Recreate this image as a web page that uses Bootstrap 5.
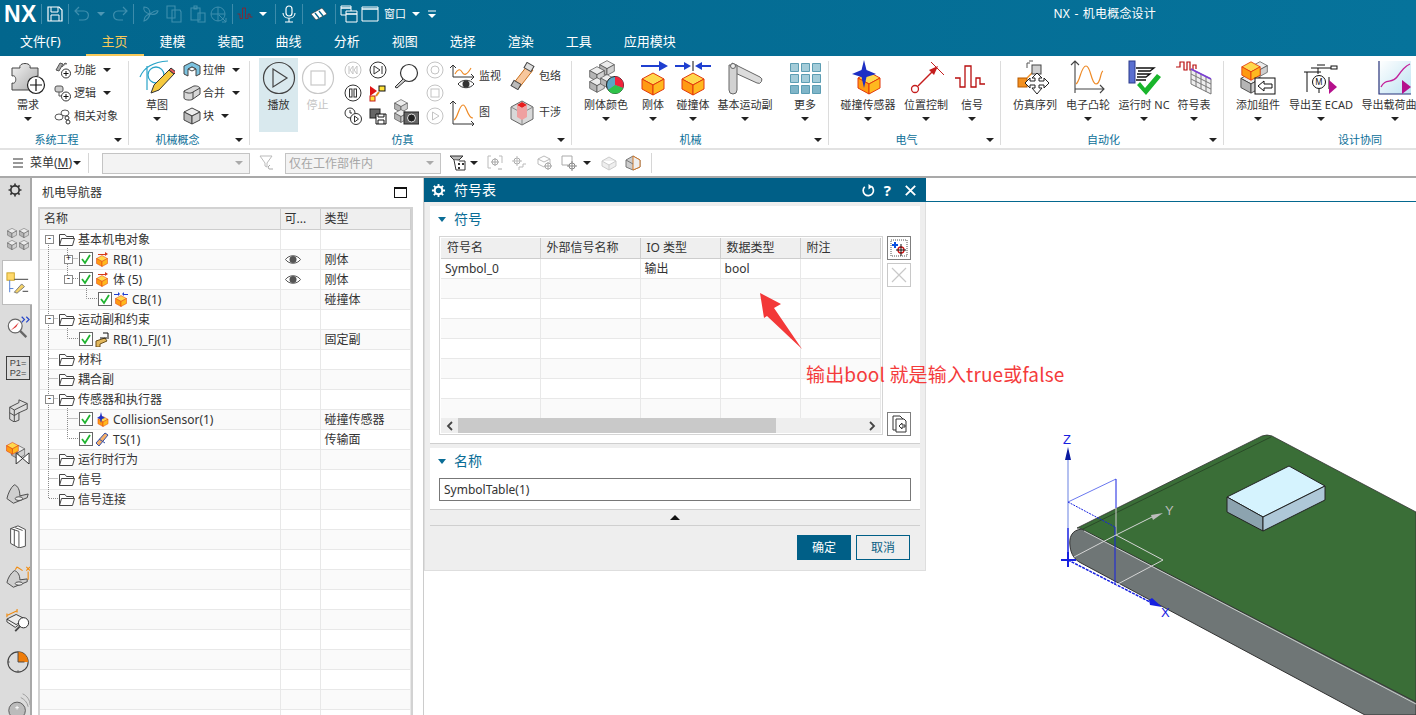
<!DOCTYPE html>
<html lang="zh-CN">

<head>
    <meta charset="UTF-8">
    <meta name="viewport" content="width=device-width, initial-scale=1.0">
    <title>NX - 机电概念设计</title>
    <link href="https://cdn.jsdelivr.net/npm/bootstrap@5.3.0/dist/css/bootstrap.min.css" rel="stylesheet">
    <style>
        html, body { height: 715px; overflow: hidden; }
        body {
            margin: 0;
            background: #fff;
            color: #333;
            font-family: "Noto Sans", "Noto Sans CJK SC", sans-serif;
            font-size: 11px;
            line-height: 14px;
        }
        svg { display: block; flex: none; }
        .sym-defs { position: absolute; }
        .tri { display: inline-block; width: 0; height: 0; border: 4px solid transparent; border-bottom: 0; border-top-color: #222; flex: none; }

        /* title + tabs */
        .top-band { background: linear-gradient(90deg, #02668d, #06739b); color: #fff; height: 56px; }
        .qa-bar { height: 28px; }
        .qa-nx { width: 37px; padding-left: 4px; font: bold 23px/28px "Liberation Sans", sans-serif; letter-spacing: .5px; }
        .qa-sep { width: 1px; height: 20px; margin: 0 4px; background: #3d8cab; flex: none; }
        .qa-btn { width: 18px; display: flex; justify-content: center; flex: none; }
        .qa-btn.wide { width: 24px; }
        .qa-tri { width: 20px; display: flex; justify-content: center; flex: none; }
        .qa-tri.nar { width: 16px; }
        .qa-tri .tri { border-top-color: #fff; }
        .qa-tri.dim .tri { border-top-color: #4f97b4; }
        .qa-win { font-size: 11px; margin-left: 2px; width: 24px; }
        .qa-title { margin-left: auto; margin-right: 260px; font-size: 12px; word-spacing: 1px; letter-spacing: .2px; }
        .tab-row { height: 28px; flex-wrap: nowrap; padding-left: 4px; }
        .tab-row .nav-link { color: #fff; font-size: 13px; line-height: 18px; padding: 4px 16px 2px; height: 28px; border-bottom: 2px solid transparent; margin-right: 0; }
        .tab-row .nav-link.file-tab { margin-right: 9px; }
        .tab-row .nav-link.active { color: #f7c95a; border-bottom-color: #f7c95a; }

        /* ribbon */
        .ribbon { height: 94px; border-bottom: 2px solid #e2e2e2; overflow: hidden; }
        .rb-group { height: 92px; flex: none; position: relative; display: flex; flex-direction: column; }
        .rb-group::after { content: ""; position: absolute; right: 0; top: 5px; bottom: 3px; width: 1px; background: #dcdcdc; }
        .rb-body { height: 77px; padding-top: 2px; display: flex; }
        .rb-foot { height: 14px; margin-top: 0; padding-right: 18px; position: relative; text-align: center; color: #0b6f98; line-height: 14px; }
        .rb-foot .tri { position: absolute; right: 7px; top: 5px; }
        .g-sys { width: 129px; padding-left: 2px; }
        .g-con { width: 121px; padding-left: 2px; }
        .g-sim { width: 322px; padding-left: 9px; }
        .g-mec { width: 257px; padding-left: 6px; }
        .g-ele { width: 172px; padding-left: 9px; }
        .g-aut { width: 223px; padding-left: 8px; }
        .g-des { width: 290px; padding-left: 8px; }
        .g-des::after { display: none; }
        .g-sim .rb-foot, .g-con .rb-foot, .g-mec .rb-foot, .g-ele .rb-foot, .g-aut .rb-foot, .g-des .rb-foot { margin-left: -8px; }
        .rb-big { display: flex; flex-direction: column; align-items: center; padding-top: 2px; height: 74px; flex: none; white-space: nowrap; }
        .rb-big svg { width: 36px; height: 36px; }
        .rb-big span.lb { margin-top: 2px; }
        .rb-big span.lb-cut { margin-right: 12px; }
        .rb-big .tri { margin-top: 5px; }
        .rb-big.is-on { background: #d9e9ee; }
        .rb-big.is-off { color: #c4c4c4; }
        .b36 { width: 36px; } .b38 { width: 38px; } .b39 { width: 39px; } .b42 { width: 42px; }
        .b44 { width: 44px; } .b52 { width: 52px; } .b54 { width: 54px; } .b56 { width: 56px; }
        .b58 { width: 58px; } .b60 { width: 60px; } .b62 { width: 62px; } .b74 { width: 74px; }
        .gap7 { margin-left: 7px; }
        .gap3 { margin-left: 3px; }
        .small-col { display: flex; flex-direction: column; flex: none; }
        .small-row { height: 23px; display: flex; align-items: center; white-space: nowrap; }
        .small-row svg { width: 18px; height: 18px; margin-right: 2px; }
        .small-row .tri { margin-left: 7px; }
        .ic-col { display: flex; flex-direction: column; align-items: center; flex: none; }
        .ic-col > div { height: 23px; display: flex; align-items: center; }
        .ic-col svg { width: 18px; height: 18px; }
        .c25 { width: 25px; } .c28 { width: 28px; } .c31 { width: 31px; }
        .lens-col { display: flex; flex-direction: column; align-items: center; }
        .lens-col svg { width: 26px; height: 26px; }
        .lens-col div { height: 36px; display: flex; align-items: center; }
        .wide-col { display: flex; flex-direction: column; flex: none; }
        .wide-col div { height: 36px; display: flex; align-items: center; white-space: nowrap; }
        .wide-col svg { width: 26px; height: 28px; margin-right: 4px; }
        .w52 { width: 60px; } .w54 { width: 60px; }

        /* selection toolbar */
        .sel-bar { height: 28px; border-bottom: 2px solid #a9a9a9; padding-left: 12px; font-size: 12px; }
        .sel-bar svg { width: 16px; height: 16px; }
        .sel-bar svg.menu-ic { width: 12px; height: 12px; margin-right: 6px; }
        .sel-sep { width: 1px; height: 20px; background: #d6d6d6; flex: none; }
        .form-select.sel-box {
            height: 21px; min-height: 21px; padding: 0 20px 0 3px; font-size: 12px; line-height: 19px; border-radius: 0;
            border-color: #c4c4c4; background-color: #f3f3f3; color: #a6a6a6; flex: none;
            background-image: url("data:image/svg+xml,%3Csvg xmlns='http://www.w3.org/2000/svg' viewBox='0 0 8 4'%3E%3Cpath d='M0 0h8L4 4z' fill='%23aaa'/%3E%3C/svg%3E");
            background-position: right 6px center; background-size: 8px 4px;
        }
        .sb-a { width: 148px; margin-left: 13px; }
        .sb-b { width: 156px; margin-left: 10px; }
        .ml1 { margin-left: 1px; }
        .ml6 { margin-left: 6px; }
        .ml7 { margin-left: 7px; }
        .ml8 { margin-left: 8px; }
        .ml9 { margin-left: 9px; }
        .ml10 { margin-left: 10px; }

        /* body */
        .work { height: 537px; position: relative; overflow: hidden; }
        .side-rail { width: 32px; background: #dcdcdc; border-right: 2px solid #a8a8a8; flex: none; }
        .rail-btn { height: 42px; width: 30px; display: flex; align-items: center; padding-left: 6px; }
        .rail-btn svg { width: 24px; height: 24px; }
        .rail-btn.first { height: 24px; margin-bottom: 16px; padding-left: 3px; }
        .rail-btn.active { background: #fff; border: 1px solid #bdbdbd; border-right: 0; height: 45px; margin-left: 2px; width: 30px; margin-right: -2px; padding-left: 3px; position: relative; }
        .nav-pane { width: 382px; flex: none; padding-left: 6px; }
        .pane-head { height: 29px; padding: 0 7px 0 4px; font-size: 12px; }
        .max-box { width: 13px; height: 11px; border: 1px solid #111; border-top-width: 2px; }
        .tree-wrap { position: relative; border: 1px solid #d2d2d2; border-width: 2px 2px 0; height: 520px; overflow: hidden; width: 375px; }
        .tree-lines { position: absolute; left: 0; top: 0; pointer-events: none; }
        .grid-tb { width: 100%; table-layout: fixed; margin: 0; border-collapse: collapse; font-size: 12px; color: #333; }
        .grid-tb > * > tr > * { padding: 0 0 0 4px; height: 20px; line-height: 19px; border-width: 0 1px 1px 0; border-style: solid; border-color: #e8e8e8; background: transparent; box-shadow: none; white-space: nowrap; overflow: hidden; color: #333; font-weight: 400; vertical-align: middle; }
        .grid-tb > thead > tr > th { background: #efefef; border-color: #cdcdcd; }
        .grid-tb > tbody > tr:nth-child(even) > td { background: #fafafa; }
        .tree-wrap .grid-tb th:nth-child(1) { width: 240px; }
        .tree-wrap .grid-tb th:nth-child(2) { width: 40px; }
        .sym-clip .grid-tb th { padding-left: 6px; }
        .sym-clip .grid-tb th:nth-child(1) { width: 99px; }
        .sym-clip .grid-tb th:nth-child(2) { width: 100px; }
        .sym-clip .grid-tb th:nth-child(3), .sym-clip .grid-tb th:nth-child(4) { width: 80px; }
        .tn { display: flex; align-items: center; height: 19px; }
        .grid-tb > tbody > tr > td.tc { padding-left: 0; }
        .exp { width: 9px; height: 9px; border: 1px solid #8a8a8a; background: #fff; flex: none; position: relative; z-index: 1; display: flex; align-items: center; justify-content: center; font: 9px/7px "Liberation Mono", monospace; color: #000; }
        .ind0 { padding-left: 5px; }
        .ind1 { padding-left: 24px; }
        .ind2 { padding-left: 58px; }
        .gap-slot { width: 9px; flex: none; }
        .chk { width: 14px; height: 14px; margin-left: 6px; position: relative; z-index: 1; }
        .ind2 .chk { margin-left: 0; }
        .tree-ic { width: 14px; height: 15px; margin-left: 2px; margin-right: 4px; }
        .fold { width: 16px; height: 13px; margin: 0 3px 0 5px; position: relative; z-index: 1; }
        .eye-ic { width: 16px; height: 11px; }
        .gfx-zone { flex: 1; position: relative; }
        .gfx-line { height: 1px; background: #05688f; margin: 23px 0 0 502px; }
        .gfx-svg { position: absolute; left: 0; top: 0; }
        .left-edge { width: 10px; flex: none; border-right: 1px solid #ccc; }

        /* dialog */
        .dlg { position: absolute; left: 424px; top: 0; width: 502px; height: 393px; background: #eee; border: 1px solid #dedede; border-top: 0; border-left: 1px solid #ddd; }
        .dlg-title { height: 24px; background: #005f87; color: #fff; margin: 0 -1px 0 -1px; padding: 0 8px 0 7px; font-size: 14px; }
        .dlg-title svg { width: 15px; height: 15px; }
        .dlg-help { font-size: 15px; font-weight: 700; margin: 0 12px 0 8px; }
        .dlg-pane { background: #fff; margin: 4px 5px 0 5px; width: 490px; }
        .dlg-p1 { height: 238px; border-bottom: 1px solid #cfcfcf; }
        .dlg-p2 { height: 62px; border-bottom: 1px solid #cfcfcf; }
        .sec-head { height: 26px; padding: 0 0 0 8px; color: #0a6d96; font-size: 14px; }
        .sec-head .tri { border-top-color: #0a6d96; border-width: 5px 4px 0; margin-right: 8px; }
        .sym-body { padding-left: 9px; padding-top: 4px; }
        .sym-box { width: 444px; height: 199px; border: 1px solid #d5d5d5; padding: 1px; overflow: hidden; flex: none; }
        .sym-clip { height: 180px; overflow: hidden; }
        .sym-bar { height: 15px; background: #eee; padding: 0 5px; }
        .sym-bar svg { width: 8px; height: 10px; }
        .sym-thumb { width: 318px; height: 15px; background: #c9c9c9; margin-left: 4px; margin-right: auto; }
        .side-btns { margin-left: 4px; height: 200px; }
        .sq-btn { width: 24px; height: 24px; border: 1px solid #7f7f7f; background: #fff; padding: 0; display: flex; align-items: center; justify-content: center; border-radius: 0; }
        .sq-btn.is-off { border-color: #c8c8c8; margin-top: 3px; }
        .sq-btn svg { width: 18px; height: 18px; }
        .name-input.form-control { width: 472px; height: 23px; min-height: 23px; margin: 4px 0 0 9px; padding: 0 4px; font-size: 12px; border: 1px solid #777; border-radius: 0; color: #333; }
        .fold-strip { height: 16px; border-bottom: 1px solid #cfcfcf; margin: 0 5px; }
        .fold-strip .tri { border-width: 0 5px 5px; border-style: solid; border-color: transparent transparent #111; }
        .dlg-foot { padding: 9px 15px 0 0; gap: 5px; }
        .dlg-foot .btn { width: 54px; height: 25px; padding: 0; border-radius: 0; font-size: 12px; line-height: 23px; }
        .btn-nx { background: #005f87; border: 1px solid #005f87; color: #fff; }
        .btn-nx-line { background: transparent; border: 1px solid #005f87; color: #0a5f84; }

        /* red note over the screenshot */
        .note-arrow { position: absolute; left: 755px; top: 110px; }
        .note-text { position: absolute; left: 806px; top: 182px; color: #f43b3b; font: 19px/28px "Noto Sans CJK SC", sans-serif; letter-spacing: .15px; white-space: nowrap; }
    </style>
</head>

<body>
    <svg class="sym-defs" width="0" height="0">
        <defs>
            <linearGradient id="gr" x1="0" y1="0" x2="1" y2="1"><stop offset="0" stop-color="#f4f4f4"/><stop offset="1" stop-color="#a9a9a9"/></linearGradient>
            <linearGradient id="bgc" x1="0" y1="0" x2="1" y2="1"><stop offset="0" stop-color="#ffffff"/><stop offset="1" stop-color="#bfe3f2"/></linearGradient>

            <symbol id="cube" viewBox="0 0 24 24">
                <path d="M12 1 23 7 12 13 1 7z" fill="#ffd84d" stroke="#e2390c"/>
                <path d="M1 7 12 13V23L1 17z" fill="#ff9a12" stroke="#e2390c"/>
                <path d="M23 7 12 13V23L23 17z" fill="#ffb81f" stroke="#e2390c"/>
            </symbol>
            <symbol id="gcube" viewBox="0 0 24 24">
                <path d="M12 1 23 7 12 13 1 7z" fill="#ececec" stroke="#444"/>
                <path d="M1 7 12 13V23L1 17z" fill="#b5b5b5" stroke="#444"/>
                <path d="M23 7 12 13V23L23 17z" fill="#d0d0d0" stroke="#444"/>
            </symbol>

            <!-- big ribbon icons -->
            <symbol id="b-req" viewBox="0 0 36 36">
                <path d="M2 8h8c-2-6 12-6 10 0h8v8c-2 0-3 1-3 3l-1 11H2v-7c5 2 5-9 0-7z" fill="url(#gr)" stroke="#444"/>
                <circle cx="26" cy="25" r="8.500" fill="#fff" stroke="#222" stroke-width="1.200"/>
                <path d="M26 19v12M20 25h12" stroke="#111" stroke-width="1.200"/>
            </symbol>
            <symbol id="b-sketch" viewBox="0 0 36 36">
                <path d="M1 17C5 7 14 2 29 1M8 6v24" fill="none" stroke="#2aa4c8" stroke-width="1.200"/>
                <circle cx="17" cy="15" r="8" fill="none" stroke="#2aa4c8" stroke-width="1.300"/>
                <path d="M12 33 15 25 30 10 35 14 20 30z" fill="#f5c93e" stroke="#333"/>
                <path d="M30 10 32 8 37 12 35 14z" fill="#e45a5a" stroke="#333"/>
            </symbol>
            <symbol id="b-play" viewBox="0 0 36 36"><circle cx="18" cy="18" r="15.500" fill="none" stroke="#444" stroke-width="1.200"/><path d="M12 9 26 18 12 27z" fill="none" stroke="#444" stroke-width="1.200"/></symbol>
            <symbol id="b-stop" viewBox="0 0 36 36"><circle cx="18" cy="18" r="15.500" fill="none" stroke="#c8c8c8" stroke-width="1.200"/><rect x="11" y="11" width="14" height="14" fill="none" stroke="#c8c8c8" stroke-width="1.200"/></symbol>
            <symbol id="b-rcolor" viewBox="0 0 36 36">
                <use href="#gcube" x="11" y="0" width="16" height="16"/><use href="#gcube" x="1" y="6" width="16" height="16"/><use href="#gcube" x="1" y="17" width="16" height="16"/><use href="#gcube" x="12" y="14" width="14" height="14"/>
                <circle cx="27" cy="25" r="8.500" fill="#5ba6c4" stroke="#222"/>
                <path d="M27 25V16.500A8.500 8.500 0 0 1 35 28z" fill="#f0243c"/><path d="M27 25 35 28A8.500 8.500 0 0 1 20 30z" fill="#2fc24a"/>
            </symbol>
            <symbol id="b-rigid" viewBox="0 0 36 36"><use href="#cube" x="6" y="12" width="24" height="24"/><path d="M6 5H24V1L33 6 24 11V7H6z" fill="#1f3fd0"/></symbol>
            <symbol id="b-coll" viewBox="0 0 36 36"><use href="#cube" x="6" y="12" width="24" height="24"/><path d="M0 5H9V2L16 6 9 10V7H0zM36 5H27V2L20 6 27 10V7H36z" fill="#1f3fd0"/><path d="M18 1V11" stroke="#111"/></symbol>
            <symbol id="b-joint" viewBox="0 0 36 36"><path d="M5 3 33 17a3 3 0 0 1-3 6L6 12z" fill="#dcdcdc" stroke="#666"/><path d="M2 5H10V30a4 4 0 0 1-8 0z" fill="#d2d2d2" stroke="#666"/><circle cx="6" cy="6" r="2.500" fill="#eee" stroke="#666"/></symbol>
            <symbol id="b-more" viewBox="0 0 36 36"><path fill="#a3ccd9" stroke="#5c9db3" d="M3.500 3.500h8v8h-8zM14.500 3.500h8v8h-8zM25.500 3.500h8v8h-8zM3.500 14.500h8v8h-8zM14.500 14.500h8v8h-8zM25.500 14.500h8v8h-8z"/><path fill="#7fb5c8" stroke="#5c9db3" d="M3.500 25.500h8v8h-8zM14.500 25.500h8v8h-8zM25.500 25.500h8v8h-8z"/></symbol>
            <symbol id="b-csens" viewBox="0 0 36 36"><use href="#cube" x="7" y="11" width="24" height="24"/><path d="M14 0 16.500 10 26 14 16.500 17 14 28 11.500 17 2 14 11.500 10z" fill="#1d2fc4"/></symbol>
            <symbol id="b-pos" viewBox="0 0 36 36"><circle cx="7" cy="29" r="3.500" fill="#fff" stroke="#c51d1d" stroke-width="1.300"/><path d="M10 26 26 10" stroke="#c51d1d" stroke-width="1.500"/><path d="M30 6 21 10 26 15z" fill="#c51d1d"/><path d="M23 2 36 15" stroke="#c51d1d"/></symbol>
            <symbol id="b-sig" viewBox="0 0 36 36"><path d="M1 18H6V27H11V6H17V27H22V18H26V24H31" fill="none" stroke="#b80e0e" stroke-width="1.300"/></symbol>
            <symbol id="b-seq" viewBox="0 0 36 36">
                <rect x="1" y="18" width="9" height="9" fill="#f39020" stroke="#b85a00"/><path d="M10 18 18 10" stroke="#f39020" stroke-width="1.500"/>
                <path d="M13 3H10V8M16 1h-4" fill="none" stroke="#555"/><rect x="15" y="5" width="9" height="9" fill="#d0d0d0" stroke="#444"/>
                <path d="M20 13 25 18H22V21H27V18L32 23 27 28V25H22V28H25L20 34 15 28H18V25H13V28L8 23 13 18V21H18V18H15z" fill="#fff" stroke="#222"/>
            </symbol>
            <symbol id="b-cam" viewBox="0 0 36 36"><path d="M5 33V1M1 5 5 1 9 5M5 29H34M30 25 34 29 30 33" fill="none" stroke="#444" stroke-width="1.100"/><path d="M6 24C10 22 11 6 16 6S21 24 26 24 30 12 33 11" fill="none" stroke="#ee8a26" stroke-width="1.200"/></symbol>
            <symbol id="b-nc" viewBox="0 0 36 36"><rect x="3" y="1" width="6" height="22" fill="#5a6fd0" stroke="#2b3b8c"/><path d="M10 8H28L24 11H12M11 14H24L20 17H11M10 20H20" fill="none" stroke="#111" stroke-width="1.300"/><path d="M14 22 19 28 31 14 35 17 20 35 11 25z" fill="#19b52b"/></symbol>
            <symbol id="b-symt" viewBox="0 0 36 36"><path d="M0 7H4V2H8V10H11V2H14V10H17V5H20V9" fill="none" stroke="#b80e0e" stroke-width="1.200"/><path d="M15 9 35 19V34L15 24z" fill="#eee" stroke="#777"/><path d="M15 14 35 24M15 19 35 29M20 11.500V27M25 14V29M30 16.500V32" stroke="#777"/><path d="M15 9 35 19" stroke="#7b3fd4" stroke-width="1.800"/></symbol>
            <symbol id="b-add" viewBox="0 0 36 36"><use href="#gcube" x="12" y="0" width="16" height="18"/><use href="#gcube" x="0" y="12" width="22" height="22"/><use href="#cube" x="0" y="1" width="22" height="20"/><rect x="15" y="18" width="20" height="16" fill="#fff" stroke="#111"/><path d="M18 26 24 21V24H32V28H24V31z" fill="#fff" stroke="#111"/></symbol>
            <symbol id="b-ecad" viewBox="0 0 36 36"><path d="M8 8H28M14 5H22M1 12H18M4 12V32M15 8V14" stroke="#111" fill="none"/><rect x="28" y="6" width="6" height="3" fill="#fff" stroke="#111"/><circle cx="16" cy="22" r="6.500" fill="#fff" stroke="#111"/><text x="16" y="25" font-size="8" text-anchor="middle" fill="#111">M</text><path d="M16 29V33M26 29V17" stroke="#111"/><path d="M26 20 34 27 26 34z" fill="#b5108c"/></symbol>
            <symbol id="b-curve" viewBox="0 0 36 36"><rect x="2" y="1" width="32" height="33" fill="url(#bgc)"/><path d="M2 1V34H34" fill="none" stroke="#27327a" stroke-width="1.200"/><path d="M4 27C8 18 15 24 20 17S28 6 33 4" fill="none" stroke="#c3209a" stroke-width="1.300"/><path d="M25 20 34 27 25 34z" fill="#b5108c"/></symbol>

            <!-- small ribbon icons -->
            <symbol id="s-func" viewBox="0 0 18 18"><path d="M2 9 6 2 9 3 5 10zM8 6 11 2 13 3" fill="#aaa" stroke="#555"/><circle cx="12" cy="12.500" r="4.500" fill="#fff" stroke="#333"/><path d="M12 10V15M9.500 12.500H14.500" stroke="#111"/></symbol>
            <symbol id="s-logic" viewBox="0 0 18 18"><rect x="1" y="2" width="8" height="6" rx="2" fill="#ccc" stroke="#555"/><path d="M5 8V12H8" fill="none" stroke="#555"/><circle cx="12" cy="12.500" r="4.500" fill="#fff" stroke="#333"/><path d="M12 10V15M9.500 12.500H14.500" stroke="#111"/></symbol>
            <symbol id="s-rel" viewBox="0 0 18 18"><ellipse cx="5" cy="10" rx="4" ry="3" fill="none" stroke="#555"/><ellipse cx="11" cy="6" rx="4" ry="3" fill="none" stroke="#555"/><circle cx="13" cy="11" r="2" fill="#fff" stroke="#333"/><circle cx="14" cy="15" r="2" fill="#fff" stroke="#333"/></symbol>
            <symbol id="s-extr" viewBox="0 0 18 18"><path d="M1 5 9 1 17 5V13L13 15V8L9 6 5 8V15L1 13z" fill="#7cc3e0" stroke="#444"/><path d="M5 8 9 6 13 8 9 10z" fill="#fff" stroke="#444"/></symbol>
            <symbol id="s-union" viewBox="0 0 18 18"><path d="M1 7V14C1 16 8 17 10 15L17 10V4C16 2 11 1 9 3L1 7C2 9 8 10 10 8L17 4" fill="#d8d8d8" stroke="#444"/><path d="M10 8V15" stroke="#444"/></symbol>
            <symbol id="s-block" viewBox="0 0 18 18"><path d="M9 1 17 5 9 9 1 5z" fill="#eee" stroke="#444"/><path d="M1 5 9 9V17L1 13z" fill="#bbb" stroke="#444"/><path d="M17 5 9 9V17L17 13z" fill="#d2d2d2" stroke="#444"/></symbol>
            <symbol id="m-rew" viewBox="0 0 18 18"><circle cx="9" cy="9" r="8" fill="none" stroke="#c4c4c4"/><path d="M5 5V13M9 5 6 9 9 13zM13 5 10 9 13 13z" fill="none" stroke="#c4c4c4"/></symbol>
            <symbol id="m-pause" viewBox="0 0 18 18"><circle cx="9" cy="9" r="8" fill="none" stroke="#333"/><rect x="5.500" y="5" width="2.500" height="8" fill="none" stroke="#333"/><rect x="10" y="5" width="2.500" height="8" fill="none" stroke="#333"/></symbol>
            <symbol id="m-clock" viewBox="0 0 18 18"><circle cx="6" cy="6" r="5" fill="#fff" stroke="#333"/><path d="M6 3V6H8" fill="none" stroke="#333"/><circle cx="12" cy="12" r="5.500" fill="#fff" stroke="#333"/><path d="M10.500 9 14.500 12 10.500 15z" fill="none" stroke="#333"/></symbol>
            <symbol id="m-fwd" viewBox="0 0 18 18"><circle cx="9" cy="9" r="8" fill="none" stroke="#333"/><path d="M5 5 11 9 5 13zM13 5V13" fill="none" stroke="#333"/></symbol>
            <symbol id="m-anim" viewBox="0 0 18 18"><path d="M1 2 8 7 1 12z" fill="#e01414"/><rect x="10" y="2" width="6" height="5" fill="#ffe23a" stroke="#111"/><rect x="1" y="12" width="5" height="5" fill="#ffe23a" stroke="#c51d1d"/><path d="M7 12 10 8" stroke="#e28a1a" stroke-width="2"/></symbol>
            <symbol id="m-save" viewBox="0 0 18 18"><rect x="1" y="2" width="10" height="9" fill="#666" stroke="#222"/><path d="M7 7H17V17H7z" fill="#fff" stroke="#111"/><path d="M9 7V10H15V7M9 17V13H15V17" fill="none" stroke="#111"/></symbol>
            <symbol id="m-ring" viewBox="0 0 18 18"><circle cx="9" cy="9" r="8" fill="none" stroke="#c4c4c4"/><circle cx="9" cy="9" r="4" fill="none" stroke="#c4c4c4"/></symbol>
            <symbol id="m-sq" viewBox="0 0 18 18"><circle cx="9" cy="9" r="8" fill="none" stroke="#c4c4c4"/><rect x="5" y="5" width="8" height="8" fill="none" stroke="#c4c4c4"/></symbol>
            <symbol id="m-tri" viewBox="0 0 18 18"><circle cx="9" cy="9" r="8" fill="none" stroke="#c4c4c4"/><path d="M6.500 5 13 9 6.500 13z" fill="none" stroke="#c4c4c4"/></symbol>
            <symbol id="l-lens" viewBox="0 0 26 26"><circle cx="16" cy="10" r="8.500" fill="#fff" stroke="#333" stroke-width="1.200"/><path d="M10 16 2 24 4 25 12 18" fill="#ccc" stroke="#333"/></symbol>
            <symbol id="l-snap" viewBox="0 0 26 26"><use href="#gcube" x="0" y="0" width="16" height="14"/><use href="#gcube" x="0" y="10" width="16" height="14"/><rect x="11" y="13" width="15" height="12" fill="#666" stroke="#222"/><circle cx="18.500" cy="19" r="4" fill="#222" stroke="#ddd"/></symbol>
            <symbol id="l-mon" viewBox="0 0 26 28"><path d="M4 15V3M1 6 4 3 7 6M4 15H25M22 12 25 15 22 18" fill="none" stroke="#333"/><path d="M6 12C8 8 11 6 13 10S18 13 22 6" fill="none" stroke="#ee8a26" stroke-width="1.100"/><path d="M9 22C13 17 21 17 25 22 21 27 13 27 9 22z" fill="#fff" stroke="#333"/><circle cx="17" cy="22" r="3.500" fill="#333"/></symbol>
            <symbol id="l-graph" viewBox="0 0 26 28"><path d="M4 26V3M1 6 4 3 7 6M4 26H25M22 23 25 26 22 29" fill="none" stroke="#333"/><path d="M5 22C9 20 10 7 14 7S18 20 24 20" fill="none" stroke="#ee8a26" stroke-width="1.200"/></symbol>
            <symbol id="l-env" viewBox="0 0 26 28"><path d="M4 22 18 4 24 8 10 26z" fill="#f7c79d" stroke="#c96f1c"/><rect x="16" y="2" width="8" height="6" transform="rotate(30 20 5)" fill="#ddd" stroke="#444"/><rect x="3" y="20" width="8" height="6" transform="rotate(30 7 23)" fill="#bbb" stroke="#444"/></symbol>
            <symbol id="l-intf" viewBox="0 0 26 28"><path d="M13 3 24 9V21L13 27 2 21V9z" fill="#d8d8d8" stroke="#666"/><path d="M2 9 13 15 24 9M13 15V27" fill="none" stroke="#888"/><path d="M8 7 13 4 18 7 13 10z" fill="#e81c1c"/><path d="M8 7 13 10V22L8 19zM18 7 13 10V22L18 19z" fill="#efa0a0"/></symbol>

            <!-- quick access -->
            <symbol id="q-save" viewBox="0 0 18 18"><path d="M2 2H13L16 5V16H2z" fill="none" stroke="#fff" stroke-width="1.200"/><path d="M5 2V7H12V2M5 16V10H13V16" fill="none" stroke="#fff"/></symbol>
            <symbol id="q-undo" viewBox="0 0 18 18"><path d="M6 2 2 6 6 10M2 6H11C17 6 17 15 10 15H6" fill="none" stroke="#3f8fae" stroke-width="1.200"/></symbol>
            <symbol id="q-redo" viewBox="0 0 18 18"><path d="M12 2 16 6 12 10M16 6H7C1 6 1 15 8 15H12" fill="none" stroke="#3f8fae" stroke-width="1.200"/></symbol>
            <symbol id="q-cut" viewBox="0 0 18 18"><path d="M9 9C4 8 2 5 3 2 7 2 9 5 9 9ZM9 9C13 6 15 5 17 6 16 9 13 10 9 9ZM9 9C8 13 6 15 3 16 3 13 5 10 9 9Z" fill="none" stroke="#3f8fae" stroke-width="1.100"/></symbol>
            <symbol id="q-copy" viewBox="0 0 18 18"><path d="M2 1H10V13H2zM7 5H15L16 7V17H7z" fill="none" stroke="#3f8fae" stroke-width="1.100"/></symbol>
            <symbol id="q-paste" viewBox="0 0 18 18"><path d="M2 3H11V15H2zM5 1H8V4H5zM9 8H16V17H9z" fill="none" stroke="#3f8fae" stroke-width="1.100"/></symbol>
            <symbol id="q-xf" viewBox="0 0 18 18"><circle cx="8" cy="9" r="7" fill="none" stroke="#3f8fae"/><path d="M1 9H15M8 2V16M9 10 16 17M12 17H16V13" fill="none" stroke="#3f8fae"/></symbol>
            <symbol id="q-mic" viewBox="0 0 18 18"><rect x="6" y="1" width="6" height="10" rx="3" fill="none" stroke="#fff" stroke-width="1.200"/><path d="M3 8C3 15 15 15 15 8M9 13V17M5 17H13" fill="none" stroke="#fff" stroke-width="1.100"/></symbol>
            <symbol id="q-tool" viewBox="0 0 18 18"><path d="M1 9 12 3 17 9 6 15z" fill="#fff" stroke="#333" stroke-width=".6"/><path d="M5 8 9 13M9 6 13 11" stroke="#02668d" stroke-width="1.300"/></symbol>
            <symbol id="q-win1" viewBox="0 0 18 18"><path d="M1 1H11V10H1z" fill="none" stroke="#fff"/><path d="M6 6H17V17H6z" fill="#02668d" stroke="#fff"/><path d="M1 3H11M6 9H17" stroke="#fff" stroke-width="1.500"/></symbol>
            <symbol id="q-win2" viewBox="0 0 18 18"><path d="M1 2H17V16H1z" fill="none" stroke="#fff"/><path d="M1 4H17" stroke="#fff" stroke-width="1.500"/></symbol>
            <symbol id="q-more" viewBox="0 0 10 10"><path d="M1 2H9" stroke="#fff"/><path d="M1 5H9L5 9z" fill="#fff"/></symbol>

            <!-- toolbar -->
            <symbol id="t-funnel" viewBox="0 0 16 16"><path d="M1 1H13L8 8V12L6 11V8z" fill="none" stroke="#bbb"/><path d="M14 14H10L9 12 11 10" fill="none" stroke="#aaa"/></symbol>
            <symbol id="t-fsel" viewBox="0 0 16 16"><path d="M0 1H13L9 5H4z" fill="#bbb" stroke="#333"/><path d="M4 5 6 15H15V6H9" fill="#fff" stroke="#333"/><path d="M8 8H10V10H8zM12 8H14V10H12zM8 12H10V14H8z" fill="#333"/></symbol>
            <symbol id="t-d1" viewBox="0 0 16 16"><path d="M4 1H1V13H4M12 1H15V8" fill="none" stroke="#bbb"/><circle cx="8" cy="7" r="3" fill="none" stroke="#aaa"/><path d="M8 3V11M4 7H12M11 14H15" stroke="#aaa"/></symbol>
            <symbol id="t-d2" viewBox="0 0 16 16"><circle cx="6" cy="6" r="3" fill="none" stroke="#aaa"/><path d="M6 1V11M1 6H11M8 15V12H12V9H15" fill="none" stroke="#bbb"/></symbol>
            <symbol id="t-d3" viewBox="0 0 16 16"><path d="M1 4 7 1 13 4V9L7 12 1 9zM1 4 7 7 13 4" fill="none" stroke="#bbb"/><circle cx="11" cy="11" r="3" fill="#fff" stroke="#aaa"/><path d="M11 7V15M7 11H15" stroke="#aaa"/></symbol>
            <symbol id="t-d4" viewBox="0 0 16 16"><path d="M1 1H11V10H1z" fill="none" stroke="#aaa"/><circle cx="11" cy="11" r="3" fill="#fff" stroke="#888"/><path d="M11 6V16M6 11H16" stroke="#888"/></symbol>
            <symbol id="t-d5" viewBox="0 0 16 16"><path d="M8 2 15 6 8 10 1 6zM1 6V11L8 15 15 11V6M8 10V15" fill="#eee" stroke="#ccc"/></symbol>
            <symbol id="t-d6" viewBox="0 0 16 16"><path d="M8 1 15 5V12L8 15 1 12V5z" fill="#ccc" stroke="#777"/><path d="M8 1 15 5V12L8 15z" fill="#eee" stroke="#d0782a"/><path d="M1 5 8 9" stroke="#777"/></symbol>

            <!-- rail -->
            <symbol id="r-gear" viewBox="0 0 26 26"><circle cx="13" cy="13" r="4.500" fill="none" stroke="#333" stroke-width="1.800"/><path d="M13 6V8.500M13 17.500V20M6 13H8.500M17.500 13H20M8 8 9.800 9.800M16.200 16.200 18 18M8 18 9.800 16.200M16.200 9.800 18 8" stroke="#333" stroke-width="1.800"/></symbol>
            <symbol id="r-cubes" viewBox="0 0 26 26"><use href="#gcube" x="1" y="1" width="11" height="11"/><use href="#gcube" x="14" y="1" width="11" height="11"/><use href="#gcube" x="1" y="14" width="11" height="11"/><use href="#gcube" x="14" y="14" width="11" height="11"/></symbol>
            <symbol id="r-nav" viewBox="0 0 26 26"><rect x="1" y="2" width="8" height="8" fill="#ffd96b" stroke="#c9a227"/><path d="M4 10V23M4 19H8" stroke="#4a78d0"/><path d="M9 9H24" stroke="#333"/><path d="M9 23 17 14 20 17 12 24z" fill="#f4d268" stroke="#777"/><path d="M18 22H24" stroke="#333"/></symbol>
            <symbol id="r-comp" viewBox="0 0 26 26"><circle cx="10" cy="13" r="7.500" fill="#fff" stroke="#666" stroke-width="1.300"/><path d="M5 18 14 9 11 14z" fill="#d33"/><path d="M15 18 22 25" stroke="#666" stroke-width="2.500"/><path d="M17 3 20 6 17 9M22 3 25 6 22 9" fill="none" stroke="#2747c9" stroke-width="1.300"/></symbol>
            <symbol id="r-par" viewBox="0 0 26 26"><rect x=".5" y=".5" width="25" height="25" fill="none" stroke="#333"/><text x="13" y="11" font-size="10" text-anchor="middle" fill="#444" font-family="Liberation Sans">P1=</text><text x="13" y="22" font-size="10" text-anchor="middle" fill="#444" font-family="Liberation Sans">P2=</text></symbol>
            <symbol id="r-box" viewBox="0 0 26 26"><path d="M14 2 23 6V12L14 16V24L9 26 4 23V10L14 5z" fill="#dcdcdc" stroke="#444"/><path d="M4 10 9 13V26M9 13 23 6M4 16 9 19 14 16" fill="none" stroke="#444"/></symbol>
            <symbol id="r-valve" viewBox="0 0 26 26"><use href="#gcube" x="5" y="1" width="16" height="24"/><use href="#cube" x="0" y="1" width="14" height="16"/><path d="M11 14 25 26V14L11 26z" fill="#fff" stroke="#222"/></symbol>
            <symbol id="r-brk" viewBox="0 0 26 26"><path d="M9 3C5 6 2 13 1 18L8 23 23 17 24 13 15 15C15 9 13 4 9 3z" fill="#cfcfcf" stroke="#444"/><ellipse cx="14" cy="18" rx="4" ry="2" fill="#eee" stroke="#444"/></symbol>
            <symbol id="r-book" viewBox="0 0 26 26"><path d="M5 5 13 2 21 6V24L14 26 5 21zM14 8V26M10 4 18 7M5 5 14 8" fill="#fff" stroke="#444"/><path d="M9 6V23" stroke="#444"/></symbol>
            <symbol id="r-brk2" viewBox="0 0 26 26"><path d="M9 5C5 8 2 13 1 18L8 23 23 17 23 14 15 15C15 10 13 6 9 5z" fill="#cfcfcf" stroke="#444"/><ellipse cx="14" cy="19" rx="4" ry="1.800" fill="#eee" stroke="#444"/><path d="M12 1 18 5M22 1 26 5M26 1 22 5M24 6V15M12 1 10 4" stroke="#f08c12" stroke-width="1.200"/></symbol>
            <symbol id="r-look" viewBox="0 0 26 26"><path d="M1 12 11 7 21 12 11 18zM1 12V15L10 21 14 18" fill="#eee" stroke="#333"/><path d="M1 8 12 3M1 6V10M12 1V5" stroke="#f08c12" stroke-width="1.200"/><circle cx="19" cy="16" r="5.500" fill="#fff" stroke="#222"/><path d="M15 20 10 25" stroke="#444" stroke-width="2"/></symbol>
            <symbol id="r-clock" viewBox="0 0 26 26"><circle cx="13" cy="13" r="11" fill="none" stroke="#444" stroke-width="1.200"/><path d="M13 13V2A11 11 0 0 1 24 13z" fill="#ee7c0a"/><path d="M13 2V13H20M2 13H4M13 22V24" fill="none" stroke="#444"/></symbol>
            <symbol id="r-sig" viewBox="0 0 26 26"><circle cx="12" cy="20" r="9" fill="#bbb" stroke="#555"/><path d="M12 15V19M10 17H14" stroke="#fff"/><path d="M16 6C20 8 23 11 24 16M18 2C23 4 26 9 26 14" fill="none" stroke="#999"/></symbol>

            <!-- tree -->
            <symbol id="i-fold" viewBox="0 0 16 13"><path d="M.5 12.500V1.500H6L7.500 3.500H14.500V5.500M.5 12.500 2.500 5.500H15.500L13.500 12.500z" fill="#fff" stroke="#444"/></symbol>
            <symbol id="i-chk" viewBox="0 0 14 14"><rect x=".5" y=".5" width="13" height="13" fill="#fff" stroke="#666"/><path d="M3 7 6 11 11 3" fill="none" stroke="#1fb42f" stroke-width="1.800"/></symbol>
            <symbol id="i-rb" viewBox="0 0 14 15"><use href="#cube" x="1" y="3" width="12" height="12"/><path d="M3 2H10V0L13 2 10 4V3H3z" fill="#d53a1c"/></symbol>
            <symbol id="i-cb" viewBox="0 0 14 15"><use href="#cube" x="1" y="3" width="12" height="12"/><path d="M0 2H4V0L6 2 4 4V3H0zM14 2H10V0L8 2 10 4V3H14z" fill="#1f3fd0"/></symbol>
            <symbol id="i-fj" viewBox="0 0 14 15"><path d="M1 9 10 6 12 9 5 12V15H1z" fill="#e3b85c" stroke="#6b4f1c"/><path d="M8 1H13V5M5 6H14" fill="none" stroke="#111"/></symbol>
            <symbol id="i-cs" viewBox="0 0 14 15"><use href="#cube" x="2" y="4" width="12" height="11"/><path d="M6 0 7 4 10 6 7 7 6 11 5 7 2 6 5 4z" fill="#1d2fc4"/></symbol>
            <symbol id="i-ts" viewBox="0 0 14 15"><path d="M1 11 10 1 13 3 4 14z" fill="#f5b06a" stroke="#3550a8"/><path d="M4 7 10 11" stroke="#3550a8"/></symbol>
            <symbol id="i-eye" viewBox="0 0 16 11"><path d="M.5 5.500C4 .5 12 .5 15.500 5.500 12 10.500 4 10.500 .5 5.500z" fill="#fff" stroke="#555"/><circle cx="8" cy="5.500" r="3.500" fill="#555"/></symbol>

            <!-- dialog -->
            <symbol id="d-gear" viewBox="0 0 16 16"><circle cx="8" cy="8" r="4" fill="none" stroke="#fff" stroke-width="2.200"/><path d="M8 1V4M8 12V15M1 8H4M12 8H15M3 3 5 5M11 11 13 13M3 13 5 11M11 5 13 3" stroke="#fff" stroke-width="2"/></symbol>
            <symbol id="d-reset" viewBox="0 0 16 16"><path d="M4 4A5.500 5.500 0 1 0 11 3.500" fill="none" stroke="#fff" stroke-width="1.800"/><path d="M8 1 12 4 8 7z" fill="#fff"/></symbol>
            <symbol id="d-close" viewBox="0 0 16 16"><path d="M3 3 13 13M13 3 3 13" stroke="#fff" stroke-width="2"/></symbol>
            <symbol id="d-add" viewBox="0 0 18 18"><path d="M1 1H17V17H1z" fill="none" stroke="#555" stroke-dasharray="1 1"/><path d="M5 3V9M2 6H8" stroke="#0a4fe0" stroke-width="2"/><circle cx="11" cy="11" r="3" fill="none" stroke="#d01414" stroke-width="1.300"/><path d="M11 5V17M6 11H16" stroke="#111"/></symbol>
            <symbol id="d-del" viewBox="0 0 18 18"><path d="M2 2 16 16M16 2 2 16" stroke="#c8c8c8" stroke-width="1.200"/></symbol>
            <symbol id="d-exp" viewBox="0 0 18 18"><path d="M3 1H10L13 4V15H3z" fill="#fff" stroke="#333"/><path d="M6 4H14L16 6V17H6z" fill="#fff" stroke="#333"/><path d="M9 11 12 8V10H15V12H12V14z" fill="none" stroke="#333"/></symbol>
            <symbol id="d-left" viewBox="0 0 8 10"><path d="M6 1 2 5 6 9" fill="none" stroke="#444" stroke-width="1.800"/></symbol>
            <symbol id="d-right" viewBox="0 0 8 10"><path d="M2 1 6 5 2 9" fill="none" stroke="#444" stroke-width="1.800"/></symbol>
        </defs>
    </svg>

    <!-- title bar and tabs -->
    <header class="top-band">
        <div class="qa-bar d-flex align-items-center">
            <div class="qa-nx">NX</div><i class="qa-sep"></i>
            <div class="qa-btn"><svg width="18" height="18"><use href="#q-save"/></svg></div><i class="qa-sep"></i>
            <div class="qa-btn"><svg width="18" height="18"><use href="#q-undo"/></svg></div>
            <div class="qa-tri dim"><i class="tri"></i></div>
            <div class="qa-btn"><svg width="18" height="18"><use href="#q-redo"/></svg></div><i class="qa-sep"></i>
            <div class="qa-btn wide"><svg width="18" height="18"><use href="#q-cut"/></svg></div>
            <div class="qa-btn wide"><svg width="18" height="18"><use href="#q-copy"/></svg></div>
            <div class="qa-btn wide"><svg width="18" height="18"><use href="#q-paste"/></svg></div>
            <div class="qa-btn"><svg width="18" height="18"><use href="#q-xf"/></svg></div><i class="qa-sep"></i>
            <div class="qa-btn"><svg width="18" height="18"><use href="#b-sig"/></svg></div>
            <div class="qa-tri nar"><i class="tri"></i></div><i class="qa-sep"></i>
            <div class="qa-btn"><svg width="18" height="18"><use href="#q-mic"/></svg></div><i class="qa-sep"></i>
            <div class="qa-btn wide"><svg width="18" height="18"><use href="#q-tool"/></svg></div><i class="qa-sep"></i>
            <div class="qa-btn"><svg width="18" height="18"><use href="#q-win1"/></svg></div>
            <div class="qa-btn wide"><svg width="18" height="18"><use href="#q-win2"/></svg></div>
            <div class="qa-win">窗口</div>
            <div class="qa-tri nar"><i class="tri"></i></div>
            <div class="qa-tri nar"><svg width="10" height="10"><use href="#q-more"/></svg></div>
            <div class="qa-title">NX - 机电概念设计</div>
        </div>
        <ul class="nav tab-row">
            <li class="nav-item"><a class="nav-link file-tab" href="#">文件(F)</a></li>
            <li class="nav-item"><a class="nav-link active" href="#">主页</a></li>
            <li class="nav-item"><a class="nav-link" href="#">建模</a></li>
            <li class="nav-item"><a class="nav-link" href="#">装配</a></li>
            <li class="nav-item"><a class="nav-link" href="#">曲线</a></li>
            <li class="nav-item"><a class="nav-link" href="#">分析</a></li>
            <li class="nav-item"><a class="nav-link" href="#">视图</a></li>
            <li class="nav-item"><a class="nav-link" href="#">选择</a></li>
            <li class="nav-item"><a class="nav-link" href="#">渲染</a></li>
            <li class="nav-item"><a class="nav-link" href="#">工具</a></li>
            <li class="nav-item"><a class="nav-link" href="#">应用模块</a></li>
        </ul>
    </header>

    <!-- ribbon -->
    <section class="ribbon d-flex">
        <div class="rb-group g-sys">
            <div class="rb-body">
                <div class="rb-big b52"><svg><use href="#b-req"/></svg><span class="lb">需求</span><i class="tri"></i></div>
                <div class="small-col">
                    <div class="small-row"><svg><use href="#s-func"/></svg>功能<i class="tri"></i></div>
                    <div class="small-row"><svg><use href="#s-logic"/></svg>逻辑<i class="tri"></i></div>
                    <div class="small-row"><svg><use href="#s-rel"/></svg>相关对象</div>
                </div>
            </div>
            <div class="rb-foot">系统工程<i class="tri"></i></div>
        </div>
        <div class="rb-group g-con">
            <div class="rb-body">
                <div class="rb-big b52"><svg><use href="#b-sketch"/></svg><span class="lb">草图</span><i class="tri"></i></div>
                <div class="small-col">
                    <div class="small-row"><svg><use href="#s-extr"/></svg>拉伸<i class="tri"></i></div>
                    <div class="small-row"><svg><use href="#s-union"/></svg>合并<i class="tri"></i></div>
                    <div class="small-row"><svg><use href="#s-block"/></svg>块<i class="tri"></i></div>
                </div>
            </div>
            <div class="rb-foot">机械概念<i class="tri"></i></div>
        </div>
        <div class="rb-group g-sim">
            <div class="rb-body">
                <div class="rb-big b39 is-on"><svg><use href="#b-play"/></svg><span class="lb">播放</span></div>
                <div class="rb-big b39 is-off"><svg><use href="#b-stop"/></svg><span class="lb">停止</span></div>
                <div class="ic-col c25 gap3">
                    <div><svg><use href="#m-rew"/></svg></div><div><svg><use href="#m-pause"/></svg></div><div><svg><use href="#m-clock"/></svg></div>
                </div>
                <div class="ic-col c25">
                    <div><svg><use href="#m-fwd"/></svg></div><div><svg><use href="#m-anim"/></svg></div><div><svg><use href="#m-save"/></svg></div>
                </div>
                <div class="lens-col c31">
                    <div><svg><use href="#l-lens"/></svg></div><div><svg><use href="#l-snap"/></svg></div>
                </div>
                <div class="ic-col c28">
                    <div><svg><use href="#m-ring"/></svg></div><div><svg><use href="#m-sq"/></svg></div><div><svg><use href="#m-tri"/></svg></div>
                </div>
                <div class="wide-col w52">
                    <div><svg><use href="#l-mon"/></svg>监视</div><div><svg><use href="#l-graph"/></svg>图</div>
                </div>
                <div class="wide-col w54">
                    <div><svg><use href="#l-env"/></svg>包络</div><div><svg><use href="#l-intf"/></svg>干涉</div>
                </div>
            </div>
            <div class="rb-foot">仿真<i class="tri"></i></div>
        </div>
        <div class="rb-group g-mec">
            <div class="rb-body">
                <div class="rb-big b56"><svg><use href="#b-rcolor"/></svg><span class="lb">刚体颜色</span><i class="tri"></i></div>
                <div class="rb-big b38"><svg><use href="#b-rigid"/></svg><span class="lb">刚体</span><i class="tri"></i></div>
                <div class="rb-big b42"><svg><use href="#b-coll"/></svg><span class="lb">碰撞体</span><i class="tri"></i></div>
                <div class="rb-big b62"><svg><use href="#b-joint"/></svg><span class="lb">基本运动副</span><i class="tri"></i></div>
                <div class="rb-big b44 gap7"><svg><use href="#b-more"/></svg><span class="lb">更多</span><i class="tri"></i></div>
            </div>
            <div class="rb-foot">机械<i class="tri"></i></div>
        </div>
        <div class="rb-group g-ele">
            <div class="rb-body">
                <div class="rb-big b60"><svg><use href="#b-csens"/></svg><span class="lb">碰撞传感器</span><i class="tri"></i></div>
                <div class="rb-big b56"><svg><use href="#b-pos"/></svg><span class="lb">位置控制</span><i class="tri"></i></div>
                <div class="rb-big b36"><svg><use href="#b-sig"/></svg><span class="lb">信号</span><i class="tri"></i></div>
            </div>
            <div class="rb-foot">电气<i class="tri"></i></div>
        </div>
        <div class="rb-group g-aut">
            <div class="rb-body">
                <div class="rb-big b52"><svg><use href="#b-seq"/></svg><span class="lb">仿真序列</span></div>
                <div class="rb-big b54"><svg><use href="#b-cam"/></svg><span class="lb">电子凸轮</span><i class="tri"></i></div>
                <div class="rb-big b58"><svg><use href="#b-nc"/></svg><span class="lb">运行时 NC</span><i class="tri"></i></div>
                <div class="rb-big b42"><svg><use href="#b-symt"/></svg><span class="lb">符号表</span><i class="tri"></i></div>
            </div>
            <div class="rb-foot">自动化<i class="tri"></i></div>
        </div>
        <div class="rb-group g-des">
            <div class="rb-body">
                <div class="rb-big b52"><svg><use href="#b-add"/></svg><span class="lb">添加组件</span><i class="tri"></i></div>
                <div class="rb-big b74"><svg><use href="#b-ecad"/></svg><span class="lb">导出至 ECAD</span><i class="tri"></i></div>
                <div class="rb-big b74"><svg><use href="#b-curve"/></svg><span class="lb lb-cut">导出载荷曲</span><i class="tri"></i></div>
            </div>
            <div class="rb-foot">设计协同</div>
        </div>
    </section>

    <!-- selection bar -->
    <section class="sel-bar d-flex align-items-center">
        <svg class="menu-ic" viewBox="0 0 12 12"><path d="M1 2H11M1 6H11M1 10H11" stroke="#333"/></svg>
        <span>菜单(<u>M</u>)</span><i class="tri ml1"></i><i class="sel-sep ml7"></i>
        <select class="form-select sel-box sb-a" disabled><option></option></select>
        <svg class="ml9"><use href="#t-funnel"/></svg>
        <select class="form-select sel-box sb-b" disabled><option>仅在工作部件内</option></select>
        <svg class="ml9"><use href="#t-fsel"/></svg><i class="tri ms-1"></i>
        <svg class="ml9"><use href="#t-d1"/></svg><svg class="ml8"><use href="#t-d2"/></svg><svg class="ml10"><use href="#t-d3"/></svg><svg class="ml8"><use href="#t-d4"/></svg><i class="tri ml6"></i>
        <svg class="ml10"><use href="#t-d5"/></svg><svg class="ml8"><use href="#t-d6"/></svg><i class="sel-sep ml10"></i>
    </section>

    <!-- workspace -->
    <main class="work d-flex">
        <aside class="side-rail">
            <div class="rail-btn first"><svg><use href="#r-gear"/></svg></div>
            <div class="rail-btn"><svg><use href="#r-cubes"/></svg></div>
            <div class="rail-btn active"><svg><use href="#r-nav"/></svg></div>
            <div class="rail-btn"><svg><use href="#r-comp"/></svg></div>
            <div class="rail-btn"><svg><use href="#r-par"/></svg></div>
            <div class="rail-btn"><svg><use href="#r-box"/></svg></div>
            <div class="rail-btn"><svg><use href="#r-valve"/></svg></div>
            <div class="rail-btn"><svg><use href="#r-brk"/></svg></div>
            <div class="rail-btn"><svg><use href="#r-book"/></svg></div>
            <div class="rail-btn"><svg><use href="#r-brk2"/></svg></div>
            <div class="rail-btn"><svg><use href="#r-look"/></svg></div>
            <div class="rail-btn"><svg><use href="#r-clock"/></svg></div>
            <div class="rail-btn"><svg><use href="#r-sig"/></svg></div>
        </aside>

        <div class="nav-pane">
            <div class="pane-head d-flex align-items-center justify-content-between"><span>机电导航器</span><i class="max-box"></i></div>
            <div class="tree-wrap">
                <table class="table grid-tb">
                    <thead><tr><th>名称</th><th>可...</th><th>类型</th></tr></thead>
                    <tbody id="tree-body"></tbody>
                </table>
                <svg class="tree-lines" width="130" height="300" fill="none" stroke="#8a8a8a" stroke-dasharray="1 1">
                    <path d="M8.500 30V289.500H18M8.500 109.500H18M8.500 149.500H18M8.500 169.500H18M8.500 189.500H18M8.500 249.500H18M8.500 269.500H18"/>
                    <path d="M27.500 39V69.500H38M27.500 49.500H38M27.500 119V129.500H38M27.500 199V229.500H38M27.500 209.500H38M46.500 79V89.500H57"/>
                </svg>
            </div>
        </div>
        <div class="left-edge"></div>

        <div class="gfx-zone">
            <div class="gfx-line"></div>
        </div>

        <!-- 3d view, drawn in page coordinates minus the workspace origin -->
        <svg class="gfx-svg" width="1416" height="537" viewBox="0 178 1416 537">
            <g stroke-linejoin="round">
                <path d="M1082 529C1071 530 1069 538 1070 546 1071 555 1075 560 1081 563L1365 715H1416V702z" fill="#6f7676" stroke="#333"/>
                <path d="M1077 528 1262 436Q1267 434 1272 436L1416 512V702L1082 529Q1080 528 1077 528z" fill="#3a6e37" stroke="#333" stroke-width=".8"/>
                <path d="M1083 529 1271 437" stroke="#2a4a28" fill="none"/>
                <path d="M1084 531 1416 704" stroke="#c8cfcb" fill="none"/>
                <path d="M1227 497 1289 466 1325 486 1263 517z" fill="#d5f3fe" stroke="#222"/>
                <path d="M1227 497 1263 517V531L1227 512z" fill="#8ca3af" stroke="#222"/>
                <path d="M1263 517 1325 486V500L1263 531z" fill="#aec8d8" stroke="#222"/>
            </g>
            <g fill="none">
                <path d="M1068 460V528" stroke="#b4c0f0" stroke-width="2"/>
                <path d="M1068 528V560" stroke="#1620e0" stroke-width="1.500"/>
                <path d="M1068 502 1116 479" stroke="#6a78f0"/>
                <path d="M1116 479V508" stroke="#1620e0"/>
                <path d="M1116 508V535" stroke="#ccc"/>
                <path d="M1068 502 1115 527" stroke="#1620e0" stroke-dasharray="2 1"/>
                <path d="M1115 527V585" stroke="#1620e0"/>
                <path d="M1068 560 1152 603" stroke="#1620e0" stroke-width="1.500" stroke-dasharray="3 1"/>
                <path d="M1074 557 1116 535 1163 560 1116 585" stroke="#d5d5d5"/>
                <path d="M1116 535 1154 516" stroke="#d5d5d5"/>
                <path d="M1061 560H1076M1068 552V567" stroke="#1620e0" stroke-width="2"/>
            </g>
            <path d="M1068 447 1071 460H1065z" fill="#0a1aa0"/>
            <path d="M1149 600 1152 598 1162 607 1150 605z" fill="#1620e0"/>
            <path d="M1163 513 1151 515 1153 520z" fill="#bdbdbd"/>
            <text x="1063" y="444" font-size="13" fill="#1620e0" font-family="Liberation Sans">Z</text>
            <text x="1165" y="515" font-size="13" fill="#bbb" font-family="Liberation Sans">Y</text>
            <text x="1161" y="617" font-size="13" fill="#1620e0" font-family="Liberation Sans">X</text>
        </svg>

        <!-- floating dialog -->
        <section class="dlg">
            <div class="dlg-title d-flex align-items-center">
                <svg><use href="#d-gear"/></svg><span class="ms-2 me-auto">符号表</span>
                <svg><use href="#d-reset"/></svg>
                <span class="dlg-help">?</span>
                <svg><use href="#d-close"/></svg>
            </div>
            <div class="dlg-pane dlg-p1">
                <div class="sec-head d-flex align-items-center"><i class="tri"></i>符号</div>
                <div class="sym-body d-flex">
                    <div class="sym-box">
                        <div class="sym-clip">
                            <table class="table grid-tb">
                                <thead><tr><th>符号名</th><th>外部信号名称</th><th>IO 类型</th><th>数据类型</th><th>附注</th></tr></thead>
                                <tbody id="sym-body"></tbody>
                            </table>
                        </div>
                        <div class="sym-bar d-flex align-items-center">
                            <svg><use href="#d-left"/></svg><i class="sym-thumb"></i><svg><use href="#d-right"/></svg>
                        </div>
                    </div>
                    <div class="side-btns d-flex flex-column">
                        <button class="sq-btn"><svg><use href="#d-add"/></svg></button>
                        <button class="sq-btn is-off"><svg><use href="#d-del"/></svg></button>
                        <button class="sq-btn mt-auto"><svg><use href="#d-exp"/></svg></button>
                    </div>
                </div>
            </div>
            <div class="dlg-pane dlg-p2">
                <div class="sec-head d-flex align-items-center"><i class="tri"></i>名称</div>
                <input class="form-control name-input" value="SymbolTable(1)">
            </div>
            <div class="fold-strip d-flex align-items-center justify-content-center"><i class="tri"></i></div>
            <div class="dlg-foot d-flex justify-content-end">
                <button class="btn btn-nx">确定</button>
                <button class="btn btn-nx-line">取消</button>
            </div>
        </section>

        <!-- red note pasted over the screenshot -->
        <svg class="note-arrow" width="50" height="65" viewBox="755 288 50 65"><path d="M760 293 781 304 774 308 802 349 767 316 764 318z" fill="#f33838"/></svg>
        <div class="note-text">输出bool 就是输入true或false</div>
    </main>

    <script src="https://cdn.jsdelivr.net/npm/bootstrap@5.3.0/dist/js/bootstrap.bundle.min.js"></script>
    <script>
        const arbol = [
            { nivel: 0, exp: '-', nombre: '基本机电对象' },
            { nivel: 1, exp: '+', icono: 'i-rb', nombre: 'RB(1)', ojo: true, tipo: '刚体' },
            { nivel: 1, exp: '-', icono: 'i-rb', nombre: '体 (5)', ojo: true, tipo: '刚体' },
            { nivel: 2, icono: 'i-cb', nombre: 'CB(1)', tipo: '碰撞体' },
            { nivel: 0, exp: '-', nombre: '运动副和约束' },
            { nivel: 1, icono: 'i-fj', nombre: 'RB(1)_FJ(1)', tipo: '固定副' },
            { nivel: 0, nombre: '材料' },
            { nivel: 0, nombre: '耦合副' },
            { nivel: 0, exp: '-', nombre: '传感器和执行器' },
            { nivel: 1, icono: 'i-cs', nombre: 'CollisionSensor(1)', tipo: '碰撞传感器' },
            { nivel: 1, icono: 'i-ts', nombre: 'TS(1)', tipo: '传输面' },
            { nivel: 0, nombre: '运行时行为' },
            { nivel: 0, nombre: '信号' },
            { nivel: 0, nombre: '信号连接' }
        ];

        function celdaNombre(f) {
            const caja = f.exp ? `<span class="exp">${f.exp}</span>` : '<span class="gap-slot"></span>';
            if (f.nivel === 0) {
                return `<div class="tn ind0">${caja}<svg class="fold"><use href="#i-fold"/></svg>${f.nombre}</div>`;
            }
            const hueco = f.nivel === 1 ? caja : '';
            return `<div class="tn ind${f.nivel}">${hueco}<svg class="chk"><use href="#i-chk"/></svg><svg class="tree-ic"><use href="#${f.icono}"/></svg>${f.nombre}</div>`;
        }

        let filas = arbol.map(f => `<tr><td class="tc">${celdaNombre(f)}</td><td>${f.ojo ? '<svg class="eye-ic"><use href="#i-eye"/></svg>' : ''}</td><td>${f.tipo || ''}</td></tr>`).join('');
        for (let i = arbol.length; i < 25; i++) {
            filas += '<tr><td></td><td></td><td></td></tr>';
        }
        document.getElementById('tree-body').innerHTML = filas;

        let simbolos = '<tr><td>Symbol_0</td><td></td><td>输出</td><td>bool</td><td></td></tr>';
        for (let i = 1; i < 8; i++) {
            simbolos += '<tr><td></td><td></td><td></td><td></td><td></td></tr>';
        }
        document.getElementById('sym-body').innerHTML = simbolos;
    </script>
</body>

</html>
